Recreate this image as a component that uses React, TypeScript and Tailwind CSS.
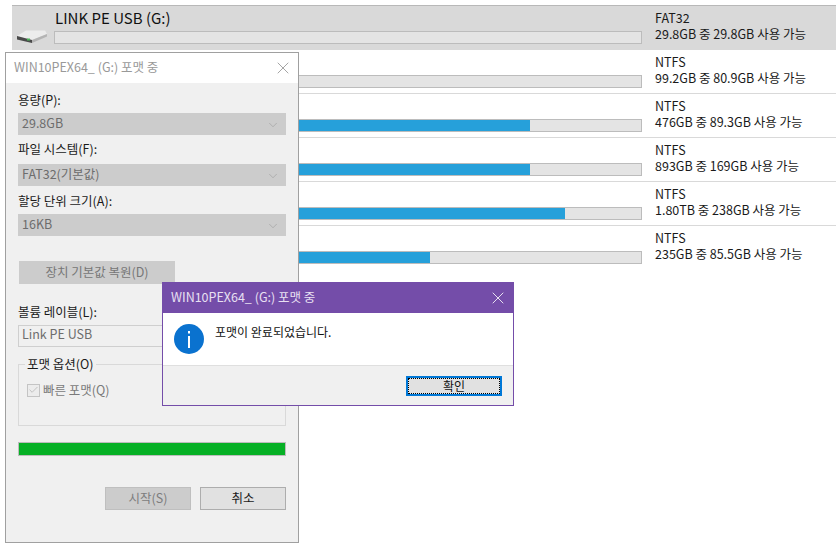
import { X, ChevronDown, Check } from 'lucide-react'

const font = { fontFamily: '"Noto Sans CJK KR", "Noto Sans", sans-serif' }

const drives = [
  { fs: 'FAT32', info: '29.8GB 중 29.8GB 사용 가능', fill: 0, selected: true },
  { fs: 'NTFS', info: '99.2GB 중 80.9GB 사용 가능', fill: 0 },
  { fs: 'NTFS', info: '476GB 중 89.3GB 사용 가능', fill: 475 },
  { fs: 'NTFS', info: '893GB 중 169GB 사용 가능', fill: 475 },
  { fs: 'NTFS', info: '1.80TB 중 238GB 사용 가능', fill: 510 },
  { fs: 'NTFS', info: '235GB 중 85.5GB 사용 가능', fill: 375 },
]

function DriveIcon() {
  return (
    <svg width="30" height="14" viewBox="0 0 30 14">
      <path d="M0 6 L9 0.5 H28 L30 4 L15 10 Z" fill="#ececec" />
      <path d="M15 10 L30 4 V6.5 L15 13 Z" fill="#b4b4b4" />
      <path d="M0 6 L15 10 V13 L0 9.5 Z" fill="#4a4a4a" />
      <rect x="10" y="8.5" width="3" height="2" fill="#4cb45a" />
    </svg>
  )
}

function DriveRow({ d }: { d: (typeof drives)[number] }) {
  return (
    <div
      className={`h-[44px] flex border-t ${
        d.selected ? 'bg-[#d9d9d9] border-[#b8b8b8]' : 'bg-white border-[#d9d9d9]'
      }`}
    >
      <div className="w-[42px] shrink-0 flex items-end justify-start pb-[5px] pl-[5px]">
        {d.selected && <DriveIcon />}
      </div>
      <div className="w-[588px] shrink-0 flex flex-col">
        <div className="h-[25px] text-[15px] leading-[24px] text-[#111] pl-[1px]">
          {d.selected && 'LINK PE USB (G:)'}
        </div>
        <div className="h-[13px] bg-[#e4e4e4] border border-[#bcbcbc]">
          {d.fill > 0 && <div className="h-full bg-[#26a0da]" style={{ width: d.fill }} />}
        </div>
      </div>
      <div className="pl-[13px] pt-[4px] text-[12.5px] leading-[16px] text-[#1a1a1a] whitespace-nowrap">
        <div>{d.fs}</div>
        <div>{d.info}</div>
      </div>
    </div>
  )
}

function Select({ value }: { value: string }) {
  return (
    <div className="h-[22px] bg-[#cccccc] flex items-center justify-between pl-[4px] pr-[6px] pb-[2px] text-[12.5px] text-[#6d6d6d]">
      <span>{value}</span>
      <ChevronDown size={14} strokeWidth={1} className="text-[#9a9a9a] mt-[3px]" />
    </div>
  )
}

function FormatDialog() {
  return (
    <div className="absolute left-[5px] top-[52px] w-[294px] h-[491px] bg-[#f0f0f0] border border-[#a0a0a0]">
      <div className="h-[30px] bg-white flex items-center justify-between pl-[8px] pr-[5px] text-[12.5px] text-[#999]">
        <span className="mt-[-2px]">WIN10PEX64_ (G:) 포맷 중</span>
        <X size={20} strokeWidth={0.8} className="text-[#777]" />
      </div>
      <div className="px-[12px] text-[12.5px] text-[#1a1a1a]">
        <div className="h-[30px] pt-[7px] leading-[20px]">용량(P):</div>
        <Select value="29.8GB" />
        <div className="h-[29px] pt-[4px] leading-[20px]">파일 시스템(F):</div>
        <Select value="FAT32(기본값)" />
        <div className="h-[28px] pt-[5px] leading-[20px]">할당 단위 크기(A):</div>
        <Select value="16KB" />
        <div className="mt-[25px] ml-[1px] w-[156px] h-[23px] bg-[#cccccc] flex items-center justify-center pb-[1px] text-[#777]">
          장치 기본값 복원(D)
        </div>
        <div className="h-[41px] pt-[19px] leading-[18px]">볼륨 레이블(L):</div>
        <div className="h-[22px] bg-[#f0f0f0] border border-[#cfcfcf] pl-[3px] leading-[16px] text-[#6d6d6d]">
          Link PE USB
        </div>
        <div className="relative mt-[17px] h-[62px] border border-[#d9d9d9]">
          <span className="absolute left-[6px] top-[-9px] bg-[#f0f0f0] px-[2px] leading-[16px]">포맷 옵션(O)</span>
          <div className="flex items-center gap-[3px] pl-[8px] pt-[17px] text-[#7a7a7a]">
            <span className="w-[13px] h-[13px] border border-[#c4c4c4] bg-[#ececec] flex items-center justify-center">
              <Check size={12} strokeWidth={1.2} className="text-[#9d9d9d]" />
            </span>
            <span className="leading-[16px]">빠른 포맷(Q)</span>
          </div>
        </div>
        <div className="mt-[16px] h-[14px] bg-[#06b025] border border-[#bcbcbc]" />
        <div className="mt-[31px] flex justify-end gap-[9px]">
          <div className="w-[86px] h-[23px] bg-[#cccccc] border border-[#bfbfbf] flex items-center justify-center text-[#7d7d7d]">
            시작(S)
          </div>
          <div className="w-[86px] h-[23px] bg-[#e1e1e1] border border-[#adadad] flex items-center justify-center">
            취소
          </div>
        </div>
      </div>
    </div>
  )
}

function MessageBox() {
  return (
    <div className="absolute left-[162px] top-[282px] w-[352px] h-[124px] bg-white border border-[#744da9] flex flex-col">
      <div className="h-[30px] shrink-0 bg-[#744da9] flex items-center justify-between pl-[8px] pr-[5px] text-[12.5px] text-[#e8e0f2]">
        <span className="mt-[-2px]">WIN10PEX64_ (G:) 포맷 중</span>
        <X size={20} strokeWidth={1} className="text-white" />
      </div>
      <div className="h-[52px] shrink-0 flex items-start pl-[11px] pt-[11px] gap-[11px] text-[12px] text-[#111]">
        <svg width="30" height="30" viewBox="0 0 30 30">
          <circle cx="15" cy="15" r="15" fill="#0a72cf" />
          <rect x="14" y="12" width="2" height="12" fill="white" />
          <rect x="14" y="7" width="2" height="2.5" fill="white" />
        </svg>
        <span className="leading-[18px] mt-[-1px]">포맷이 완료되었습니다.</span>
      </div>
      <div className="flex-1 bg-[#f0f0f0] border-t border-[#dfdfdf] flex justify-end items-start pt-[10px] pr-[11px]">
        <div className="w-[96px] h-[20px] bg-[#e1e1e1] border-2 border-[#0078d7] outline-1 outline-dotted outline-offset-[-3px] outline-black flex items-center justify-center text-[12px] text-[#111]">
          확인
        </div>
      </div>
    </div>
  )
}

export default function App() {
  return (
    <div className="relative w-[836px] h-[546px] bg-white overflow-hidden" style={font}>
      <div className="pt-[5px] pl-[12px]">
        {drives.map((d, i) => (
          <DriveRow key={i} d={d} />
        ))}
      </div>
      <FormatDialog />
      <MessageBox />
    </div>
  )
}
